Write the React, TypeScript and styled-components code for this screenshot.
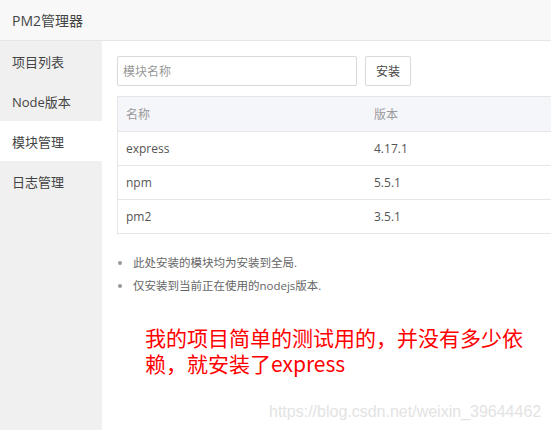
import React, { useState } from 'react';
import styled, { createGlobalStyle } from 'styled-components';

const GlobalStyle = createGlobalStyle`
    html, body {
        margin: 0;
        padding: 0;
        background: #fff;
        font-family: "Open Sans", "Noto Sans CJK SC", sans-serif;
    }
`;

const menus = ['项目列表', 'Node版本', '模块管理', '日志管理'];

const modules = [
    { name: 'express', version: '4.17.1' },
    { name: 'npm', version: '5.5.1' },
    { name: 'pm2', version: '3.5.1' },
];

export default function App() {
    const [active, setActive] = useState(2);

    return (
        <Page>
            <GlobalStyle />
            <Header>PM2管理器</Header>
            <Body>
                <Sidebar>
                    {menus.map((m, i) => (
                        <MenuItem key={m} active={i === active} onClick={() => setActive(i)}>
                            {m}
                        </MenuItem>
                    ))}
                </Sidebar>
                <Content>
                    <Toolbar>
                        <SearchInput placeholder="模块名称" />
                        <InstallButton>安装</InstallButton>
                    </Toolbar>
                    <Table>
                        <thead>
                            <tr>
                                <HeadCell>名称</HeadCell>
                                <HeadCell>版本</HeadCell>
                            </tr>
                        </thead>
                        <tbody>
                            {modules.map((m) => (
                                <tr key={m.name}>
                                    <Cell>{m.name}</Cell>
                                    <Cell>{m.version}</Cell>
                                </tr>
                            ))}
                        </tbody>
                    </Table>
                    <Tips>
                        <li>此处安装的模块均为安装到全局.</li>
                        <li>仅安装到当前正在使用的nodejs版本.</li>
                    </Tips>
                    <Note>我的项目简单的测试用的，并没有多少依赖，就安装了express</Note>
                    <Watermark>https://blog.csdn.net/weixin_39644462</Watermark>
                </Content>
            </Body>
        </Page>
    );
}

const Page = styled.div`
    width: 551px;
    height: 430px;
    overflow: hidden;
    display: flex;
    flex-direction: column;
`;

const Header = styled.div`
    height: 41px;
    flex-shrink: 0;
    box-sizing: border-box;
    padding-left: 12px;
    display: flex;
    align-items: center;
    background: #f8f8f8;
    border-bottom: 1px solid #e6e6e6;
    font-size: 14px;
    color: #444;
`;

const Body = styled.div`
    flex: 1;
    display: flex;
    min-height: 0;
`;

const Sidebar = styled.div`
    width: 102px;
    flex-shrink: 0;
    background: #f0f0f0;
    display: flex;
    flex-direction: column;
`;

const MenuItem = styled.div<{ active: boolean }>`
    height: 40px;
    display: flex;
    align-items: center;
    padding-left: 12px;
    font-size: 13px;
    color: #444;
    cursor: pointer;
    background: ${({ active }) => (active ? '#fff' : 'transparent')};
`;

const Content = styled.div`
    flex: 1;
    min-width: 0;
    position: relative;
    padding: 15px 0 0 15px;
    overflow: hidden;
`;

const Toolbar = styled.div`
    display: flex;
    gap: 8px;
    margin-bottom: 10px;
`;

const SearchInput = styled.input`
    width: 240px;
    height: 30px;
    box-sizing: border-box;
    border: 1px solid #d9d9d9;
    border-radius: 2px;
    padding: 0 5px;
    font-size: 12px;
    font-family: inherit;
    color: #333;
    outline: none;

    &::placeholder {
        color: #999;
    }
`;

const InstallButton = styled.button`
    height: 30px;
    padding: 0 10px;
    box-sizing: border-box;
    border: 1px solid #d9d9d9;
    border-radius: 2px;
    background: #fff;
    font-size: 12px;
    font-family: inherit;
    color: #444;
`;

const Table = styled.table`
    width: 460px;
    border-collapse: collapse;
    font-size: 12px;
    color: #555;
`;

const HeadCell = styled.th`
    height: 34px;
    padding: 0 8px;
    text-align: left;
    font-weight: normal;
    color: #999;
    background: #f5f6fa;
    border: 1px solid #e6e6e6;
    border-right: none;
    border-left: none;

    &:first-child {
        width: 232px;
        border-left: 1px solid #e6e6e6;
    }
`;

const Cell = styled.td`
    height: 33px;
    padding: 0 8px;
    border-bottom: 1px solid #e6e6e6;

    &:first-child {
        border-left: 1px solid #e6e6e6;
    }
`;

const Tips = styled.ul`
    margin: 17px 0 0 0;
    padding-left: 16px;
    font-size: 11.5px;
    color: #666;
    line-height: 23px;

    li::marker {
        color: #999;
    }
`;

const Note = styled.div`
    margin: 27px 0 0 28px;
    width: 390px;
    font-size: 21px;
    line-height: 26px;
    color: #ff0000;
    font-family: "Noto Sans CJK SC", sans-serif;
`;

const Watermark = styled.div`
    position: absolute;
    left: 167px;
    top: 362px;
    font-family: "Liberation Sans", Arial, sans-serif;
    font-size: 16px;
    color: #e3e3e3;
    white-space: nowrap;
`;
